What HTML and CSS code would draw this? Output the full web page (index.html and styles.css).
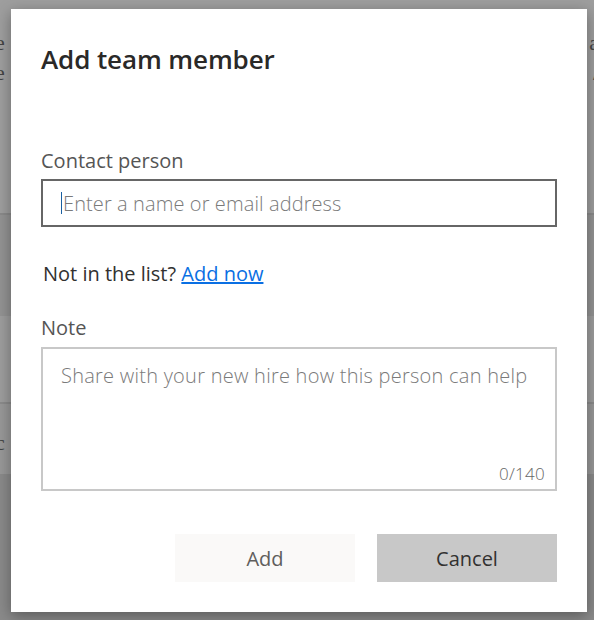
FILE: index.html
```html
<!DOCTYPE html>
<html>
<head>
<meta charset="utf-8">
<link rel="stylesheet" href="styles.css">
</head>
<body>
<div class="page">
  <div class="band band-top">
    <div class="ghost-row"><span class="ghost-l">e</span><span class="ghost-r">a</span></div>
    <div class="ghost-row"><span class="ghost-l">e</span><span class="ghost-r">/</span></div>
  </div>
  <div class="band band-mid1"></div>
  <div class="band band-mid2"></div>
  <div class="band band-mid3">
    <div class="ghost-row"><span class="ghost-l">c</span></div>
  </div>
  <div class="band band-bottom"></div>
</div>

<div class="dialog">
  <h1 class="title">Add team member</h1>

  <label class="label label-contact">Contact person</label>
  <div class="input"><span class="caret"></span><span class="placeholder">Enter a name or email address</span></div>

  <p class="hint">Not in the list? <a href="#" class="link">Add now</a></p>

  <label class="label label-note">Note</label>
  <div class="textarea">
    <span class="placeholder placeholder-note">Share with your new hire how this person can help</span>
    <span class="counter">0/140</span>
  </div>

  <div class="actions">
    <button class="btn btn-add">Add</button>
    <button class="btn btn-cancel">Cancel</button>
  </div>
</div>
</body>
</html>
```
FILE: styles.css
```css
* { box-sizing: border-box; }
html, body { margin: 0; padding: 0; }
body {
  width: 594px;
  height: 620px;
  overflow: hidden;
  background: #8c8c8c;
  font-family: "Open Sans", "Noto Sans", sans-serif;
  position: relative;
}
.page { display: flex; flex-direction: column; height: 620px; }
.band { width: 100%; }
.band-top { height: 215px; background: #9e9e9e; border-bottom: 2px solid #8a8a8a; padding-top: 30px; }
.band-mid1 { height: 101px; background: #939393; }
.band-mid2 { height: 88px; background: #9d9d9d; border-bottom: 2px solid #8b8b8b; }
.band-mid3 { height: 70px; background: #989898; padding-top: 26px; }
.band-bottom { flex: 1; background: #8a8a8a; }
.ghost-row { display: flex; justify-content: space-between; height: 30px; font-size: 22px; color: #444; }
.ghost-l { margin-left: -5px; font-family: "Liberation Serif", serif; }
.ghost-r { margin-right: -5px; font-family: "Liberation Serif", serif; }

.dialog {
  position: absolute;
  left: 11px;
  top: 9px;
  width: 576px;
  height: 603px;
  background: #fff;
  box-shadow: 0 4px 14px rgba(0,0,0,0.35);
  padding: 30px 30px 30px 30px;
  display: flex;
  flex-direction: column;
}
.title {
  margin: 0;
  font-size: 26px;
  font-weight: 600;
  color: #2a2928;
  line-height: 40px;
  letter-spacing: -0.1px;
}
.label {
  display: block;
  font-size: 20px;
  line-height: 26px;
  color: #555;
}
.label-contact { margin-top: 69px; }
.input {
  margin-top: 5px;
  height: 48px;
  border: 2px solid #666;
  display: flex;
  align-items: center;
  padding-left: 18px;
}
.caret { width: 1px; height: 22px; background: #1a5fa0; margin-right: 1px; }
.placeholder { font-size: 20px; color: #7a7a7a; font-weight: 300; letter-spacing: 0.1px; }
.placeholder-note { letter-spacing: 0.25px; }
.hint { margin: 34px 0 0 2px; font-size: 20px; line-height: 26px; color: #323130; }
.link { color: #0a6fe3; text-decoration: underline; }
.label-note { margin-top: 28px; }
.textarea {
  margin-top: 6px;
  height: 144px;
  border: 2px solid #c8c8c8;
  padding: 13px 18px 4px 18px;
  display: flex;
  flex-direction: column;
  justify-content: space-between;
}
.counter { align-self: flex-end; font-size: 17px; color: #666; margin-right: -8px; font-weight: 300; letter-spacing: 0.3px; }
.actions {
  margin-top: 43px;
  display: flex;
  justify-content: flex-end;
  gap: 22px;
}
.btn {
  width: 180px;
  height: 48px;
  border: none;
  font-family: inherit;
  font-size: 20px;
  padding: 0;
}
.btn-add { background: #faf9f8; color: #605e5c; }
.btn-cancel { background: #c8c8c8; color: #323130; }
```
